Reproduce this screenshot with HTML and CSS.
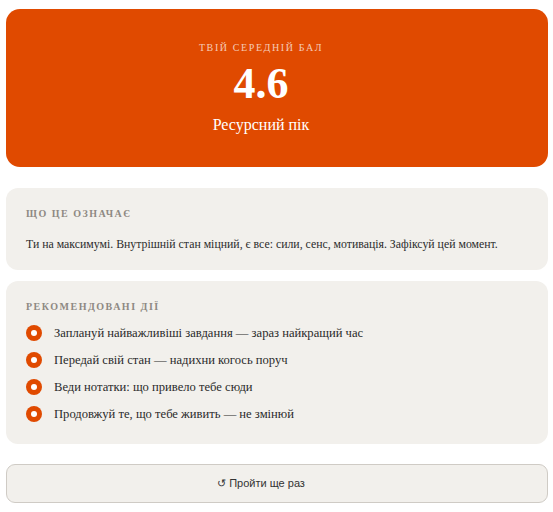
FILE: index.html
```html
<!DOCTYPE html>
<html>
<head>
<meta charset="utf-8">
<link rel="stylesheet" href="styles.css">
</head>
<body>
<main class="page">
  <section class="hero">
    <div class="hero-label">ТВІЙ СЕРЕДНІЙ БАЛ</div>
    <div class="hero-score">4.6</div>
    <div class="hero-title">Ресурсний пік</div>
  </section>

  <section class="card card-meaning">
    <div class="card-label">ЩО ЦЕ ОЗНАЧАЄ</div>
    <p class="card-text">Ти на максимумі. Внутрішній стан міцний, є все: сили, сенс, мотивація. Зафіксуй цей момент.</p>
  </section>

  <section class="card card-actions">
    <div class="card-label">РЕКОМЕНДОВАНІ ДІЇ</div>
    <ul class="actions">
      <li class="action"><span class="dot"></span>Заплануй найважливіші завдання — зараз найкращий час</li>
      <li class="action"><span class="dot"></span>Передай свій стан — надихни когось поруч</li>
      <li class="action"><span class="dot"></span>Веди нотатки: що привело тебе сюди</li>
      <li class="action"><span class="dot"></span>Продовжуй те, що тебе живить — не змінюй</li>
    </ul>
  </section>

  <button class="retry" type="button">↺ Пройти ще раз</button>
</main>
</body>
</html>
```

FILE: styles.css
```css
* { box-sizing: border-box; }
html, body { margin: 0; padding: 0; background: #fff; }
body { font-family: "Liberation Serif", "Times New Roman", serif; color: #2b2b2b; }

.page {
  display: flex;
  flex-direction: column;
  padding: 9px 5px 0 6px;
}

.hero {
  background: #e04a00;
  border-radius: 14px;
  height: 158px;
  display: flex;
  flex-direction: column;
  align-items: center;
  padding: 33px 32px 0 0;
  color: #fff;
}
.hero-label {
  font-size: 10px;
  letter-spacing: 1.6px;
  color: rgba(255, 255, 255, 0.72);
  line-height: 12px;
}
.hero-score {
  font-size: 44px;
  font-weight: bold;
  line-height: 50px;
  margin-top: 5px;
}
.hero-title {
  font-size: 16px;
  line-height: 20px;
  margin-top: 6px;
}

.card {
  background: #f2f0ec;
  border-radius: 12px;
  padding: 20px 20px 0 20px;
}
.card-meaning { margin-top: 21px; height: 82px; }
.card-actions { margin-top: 11px; height: 163px; }

.card-label {
  font-size: 10px;
  font-weight: bold;
  letter-spacing: 1.5px;
  color: #8e8983;
  line-height: 12px;
}
.card-text {
  margin: 15px 0 0 0;
  font-size: 11.8px;
  line-height: 18px;
  color: #2b2b2b;
}

.actions {
  list-style: none;
  margin: 11px 0 0 0;
  padding: 0;
  display: flex;
  flex-direction: column;
  gap: 9px;
}
.action {
  display: flex;
  align-items: center;
  font-size: 12.6px;
  line-height: 18px;
  color: #2b2b2b;
}
.dot {
  width: 16px;
  height: 16px;
  border-radius: 50%;
  background: #e04a00;
  margin: 0 12px 0 0;
  display: flex;
  align-items: center;
  justify-content: center;
  flex: none;
}
.dot::after {
  content: "";
  width: 6px;
  height: 6px;
  border-radius: 50%;
  background: #fff;
}

.retry {
  margin-top: 20px;
  height: 39px;
  border: 1px solid #cfcbc5;
  border-radius: 9px;
  background: #f2f0ec;
  padding: 0 32px 0 0;
  font-family: "Liberation Sans", Arial, sans-serif;
  font-size: 11px;
  color: #333;
  cursor: pointer;
}
```
